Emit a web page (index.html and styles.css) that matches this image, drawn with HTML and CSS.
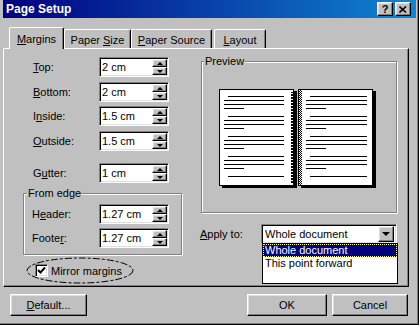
FILE: index.html
```html
<!DOCTYPE html>
<html lang="en">
<head>
  <meta charset="UTF-8" />
  <meta name="viewport" content="width=device-width, initial-scale=1.0" />
  <title>Page Setup</title>
  <link rel="stylesheet" href="styles.css">
</head>
<body>
  <div class="window">
    <div class="titlebar">
      <span class="title">Page Setup</span>
      <div class="title-buttons">
        <span class="tbtn">?</span>
        <span class="tbtn">
          <svg width="8" height="7" viewBox="0 0 8 7"><path d="M0.5 0.5 L7 6.5 M7 0.5 L0.5 6.5" stroke="#000" stroke-width="1.6" fill="none"/></svg>
        </span>
      </div>
    </div>

    <div class="tabs">
      <div class="tab active tab-margins"><span><u>M</u>argins</span></div>
      <div class="tab tab-size"><span>Paper <u>S</u>ize</span></div>
      <div class="tab tab-source"><span><u>P</u>aper Source</span></div>
      <div class="tab tab-layout"><span><u>L</u>ayout</span></div>
    </div>

    <div class="panel">
      <div class="col-left">
        <div class="row">
          <span class="lbl"><u>T</u>op:</span>
          <div class="spin"><span class="val">2 cm</span><span class="arrows"><span class="arr-btn"><i class="tri up"></i></span><span class="arr-btn"><i class="tri down"></i></span></span></div>
        </div>
        <div class="row">
          <span class="lbl"><u>B</u>ottom:</span>
          <div class="spin"><span class="val">2 cm</span><span class="arrows"><span class="arr-btn"><i class="tri up"></i></span><span class="arr-btn"><i class="tri down"></i></span></span></div>
        </div>
        <div class="row row-tight">
          <span class="lbl">I<u>n</u>side:</span>
          <div class="spin"><span class="val">1.5 cm</span><span class="arrows"><span class="arr-btn"><i class="tri up"></i></span><span class="arr-btn"><i class="tri down"></i></span></span></div>
        </div>
        <div class="row">
          <span class="lbl"><u>O</u>utside:</span>
          <div class="spin"><span class="val">1.5 cm</span><span class="arrows"><span class="arr-btn"><i class="tri up"></i></span><span class="arr-btn"><i class="tri down"></i></span></span></div>
        </div>
        <div class="row row-apart">
          <span class="lbl">G<u>u</u>tter:</span>
          <div class="spin"><span class="val">1 cm</span><span class="arrows"><span class="arr-btn"><i class="tri up"></i></span><span class="arr-btn"><i class="tri down"></i></span></span></div>
        </div>

        <fieldset class="group edge">
          <legend>From edge</legend>
          <div class="row">
            <span class="lbl">H<u>e</u>ader:</span>
            <div class="spin"><span class="val">1.27 cm</span><span class="arrows"><span class="arr-btn"><i class="tri up"></i></span><span class="arr-btn"><i class="tri down"></i></span></span></div>
          </div>
          <div class="row row-tight">
            <span class="lbl">Foote<u>r</u>:</span>
            <div class="spin"><span class="val">1.27 cm</span><span class="arrows"><span class="arr-btn"><i class="tri up"></i></span><span class="arr-btn"><i class="tri down"></i></span></span></div>
          </div>
        </fieldset>

        <div class="check-row">
          <span class="checkbox">
            <svg width="9" height="9" viewBox="0 0 9 9"><path d="M1 4 L3.5 6.5 L8 1.5" stroke="#000" stroke-width="2" fill="none"/></svg>
          </span>
          <span>Mirror margins</span>
          <svg class="ellipse" width="108" height="27" viewBox="0 0 108 27">
            <ellipse cx="54" cy="13.5" rx="53" ry="12.5" fill="none" stroke="#000" stroke-width="1" stroke-dasharray="7 2 3 2"/>
          </svg>
        </div>
      </div>

      <div class="col-right">
        <fieldset class="group preview">
          <legend>Preview</legend>
          <svg class="pages" width="158" height="102" viewBox="0 0 158 102">
            <defs>
              <pattern id="checker" width="2" height="2" patternUnits="userSpaceOnUse">
                <rect width="2" height="2" fill="#fff"/>
                <rect width="1" height="1" fill="#000"/>
                <rect x="1" y="1" width="1" height="1" fill="#000"/>
              </pattern>
              <pattern id="coil" width="4" height="3" patternUnits="userSpaceOnUse">
                <rect width="4" height="2" fill="#000"/>
              </pattern>
            </defs>
            <rect x="4" y="3" width="75" height="97" fill="#000"/>
            <rect x="83" y="3" width="75" height="97" fill="#000"/>
            <rect x="1.5" y="1.5" width="74" height="96" fill="#fff" stroke="#000"/>
            <rect x="80.5" y="1.5" width="74" height="96" fill="#fff" stroke="#000"/>
            <rect x="73" y="4" width="4" height="92" fill="url(#coil)"/>
            <rect x="81" y="2" width="3" height="95" fill="url(#checker)"/>
            <path stroke="#000" fill="none" d="
              M10 8.5H66 M6 12.5H66 M6 16.5H66 M6 20.5H26
              M10 28.5H66 M6 32.5H66 M6 36.5H66 M6 40.5H26
              M10 48.5H66 M6 52.5H66 M6 56.5H66 M6 60.5H26
              M10 68.5H66 M6 72.5H66 M6 76.5H66 M6 80.5H26
              M10 88.5H66
              M92 8.5H149 M88 12.5H149 M88 16.5H149 M88 20.5H108
              M92 28.5H149 M88 32.5H149 M88 36.5H149 M88 40.5H108
              M92 48.5H149 M88 52.5H149 M88 56.5H149 M88 60.5H108
              M92 68.5H149 M88 72.5H149 M88 76.5H149 M88 80.5H108
              M92 88.5H149"/>
          </svg>
        </fieldset>

        <div class="apply-row">
          <span class="lbl"><u>A</u>pply to:</span>
          <div class="combo">
            <span class="val">Whole document</span>
            <span class="drop"><i class="tri down big"></i></span>
            <div class="listbox">
              <div class="opt selected">Whole document</div>
              <div class="opt">This point forward</div>
            </div>
          </div>
        </div>
      </div>
    </div>

    <div class="footer">
      <button class="btn btn-default"><u>D</u>efault...</button>
      <button class="btn btn-ok">OK</button>
      <button class="btn btn-cancel">Cancel</button>
    </div>
  </div>
</body>
</html>
```

FILE: styles.css
```css
* { box-sizing: border-box; }
body {
  margin: 0;
  background: #c0c0c0;
  font-family: "Liberation Sans", Arial, sans-serif;
  font-size: 11px;
  color: #000;
}
u { text-decoration: underline; text-underline-offset: 1px; }

.window {
  width: 419px;
  height: 325px;
  padding: 0 3px;
  background: #c0c0c0;
  box-shadow: inset -1px -1px 0 #000, inset -2px -2px 0 #808080;
}

/* title bar */
.titlebar {
  height: 18px;
  display: flex;
  align-items: center;
  justify-content: space-between;
  padding: 0 5px 0 3px;
  background: linear-gradient(to right, #000080, #1084d0);
}
.title { color: #fff; font-weight: bold; font-size: 12px; }
.title-buttons { display: flex; gap: 2px; }
.tbtn {
  width: 16px;
  height: 14px;
  display: flex;
  align-items: center;
  justify-content: center;
  font-weight: bold;
  font-size: 11px;
  line-height: 1;
}

/* raised look, shared */
.tbtn, .arr-btn, .drop, .btn {
  background: #c0c0c0;
  border: 1px solid;
  border-color: #fff #000 #000 #fff;
  box-shadow: inset -1px -1px 0 #808080, inset 1px 1px 0 #dfdfdf;
}

/* sunken look, shared */
.spin, .combo, .checkbox {
  background: #fff;
  border: 1px solid;
  border-color: #808080 #fff #fff #808080;
  box-shadow: inset 1px 1px 0 #000, inset -1px -1px 0 #dfdfdf;
}

/* tabs */
.tabs {
  display: flex;
  align-items: flex-end;
  height: 21px;
  margin-top: 9px;
  padding-left: 6px;
  position: relative;
  z-index: 1;
}
.tab {
  height: 19px;
  display: flex;
  align-items: center;
  justify-content: center;
  padding-top: 1px;
  border: 1px solid;
  border-bottom: 0;
  border-color: #fff #000 #000 #fff;
  border-radius: 2px 2px 0 0;
  box-shadow: inset -1px 0 0 #808080;
  background: #c0c0c0;
}
.tab.active { height: 22px; margin-bottom: -1px; }
.tab-margins { width: 55px; }
.tab-size { width: 67px; }
.tab-source { width: 81px; }
.tab-layout { width: 52px; margin-left: 2px; }

/* panel */
.panel {
  display: flex;
  width: 406px;
  height: 239px;
  border: 1px solid;
  border-color: #fff #000 #000 #fff;
  box-shadow: inset -1px -1px 0 #808080;
}
.col-left { width: 196px; padding: 8px 0 0 19px; }
.col-right { padding-top: 6px; }

.row { display: flex; align-items: center; height: 20px; padding-left: 10px; }
.row + .row { margin-top: 5px; }
.row.row-tight { margin-top: 4px; }
.row.row-apart { margin-top: 12px; }
.lbl { width: 66px; }

.spin {
  width: 70px;
  height: 20px;
  display: flex;
  align-items: center;
  justify-content: space-between;
  padding: 2px 1px 2px 2px;
}
.arrows { display: flex; flex-direction: column; width: 15px; height: 16px; }
.arr-btn { flex: 1; display: flex; align-items: center; justify-content: center; }
.tri { display: block; width: 0; height: 0; border-left: 3px solid transparent; border-right: 3px solid transparent; }
.tri.up { border-bottom: 3px solid #000; }
.tri.down { border-top: 3px solid #000; }
.tri.big { border-left-width: 4px; border-right-width: 4px; border-top-width: 4px; }

/* group boxes */
.group {
  margin: 0;
  min-width: 0;
  border: 1px solid #808080;
  box-shadow: 1px 1px 0 #fff, inset 1px 1px 0 #fff;
}
.group legend { padding: 0 1px; margin-left: -5px; line-height: 13px; background: #c0c0c0; }
.edge { width: 159px; margin-top: 4px; padding: 4px 0 6px 8px; }
.edge .row { padding-left: 0; }
.edge .lbl { width: 67px; }

.preview { width: 196px; height: 158px; margin-left: 1px; padding: 20px 0 0 16px; }
.preview legend { margin-left: -14px; }
.pages { display: block; }

/* checkbox */
.check-row {
  position: relative;
  display: flex;
  align-items: center;
  height: 13px;
  margin-top: 9px;
  padding-left: 12px;
}
.checkbox {
  width: 13px;
  height: 13px;
  margin-right: 3px;
  display: flex;
  align-items: center;
  justify-content: center;
}
.ellipse { position: absolute; left: 3px; top: -7px; }

/* apply to */
.apply-row { display: flex; align-items: center; margin-top: 11px; }
.apply-row .lbl { width: 61px; }
.combo {
  position: relative;
  width: 136px;
  height: 20px;
  display: flex;
  align-items: center;
  padding: 2px;
}
.combo .val { flex: 1; padding-left: 1px; }
.drop { width: 16px; height: 16px; display: flex; align-items: center; justify-content: center; }
.listbox {
  position: absolute;
  left: 0;
  top: 100%;
  width: 136px;
  height: 41px;
  background: #fff;
  border: 1px solid #000;
}
.opt { height: 13px; line-height: 13px; padding-left: 2px; }
.opt.selected { background: #000080; color: #fff; outline: 1px dotted #ffff80; outline-offset: -1px; }

/* footer */
.footer { display: flex; padding: 7px 8px 0 7px; }
.btn { height: 22px; padding: 0; font: inherit; color: #000; }
.btn-default { width: 77px; }
.btn-ok { width: 80px; margin-left: auto; }
.btn-cancel { width: 76px; margin-left: 5px; }
```
